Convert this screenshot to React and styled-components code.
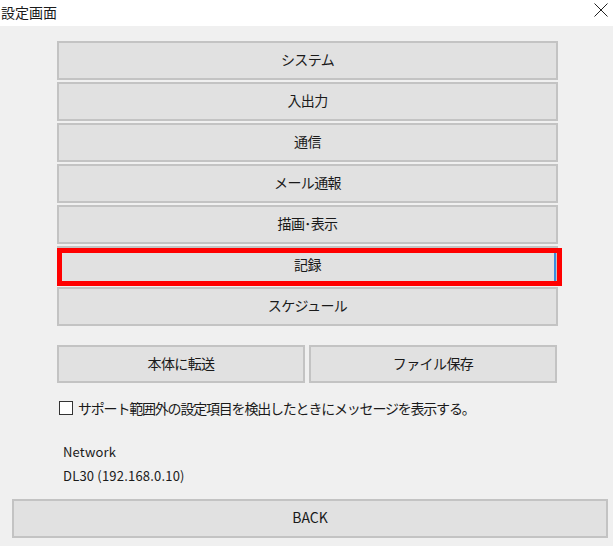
import styled, { createGlobalStyle } from 'styled-components';

const GlobalStyle = createGlobalStyle`
  html, body {
    margin: 0;
    padding: 0;
    background: #f0f0f0;
  }
  body {
    font-family: "Noto Sans CJK JP", "Noto Sans", sans-serif;
    color: #1a1a1a;
  }
`;

const Window = styled.div`
  width: 613px;
  height: 546px;
  display: flex;
  flex-direction: column;
  overflow: hidden;
`;

const TitleBar = styled.div`
  height: 26px;
  background: #fff;
  display: flex;
  align-items: center;
  justify-content: space-between;
  padding: 0 5px 0 1px;
  box-sizing: border-box;
`;

const Title = styled.span`
  font-size: 14px;
  line-height: 1;
  margin-top: -3px;
`;

const Close = styled.svg`
  width: 14px;
  height: 14px;
  margin-top: -7px;
`;

const Body = styled.div`
  flex: 1;
  background: #f0f0f0;
  display: flex;
  flex-direction: column;
  padding-top: 15px;
`;

const Menu = styled.div`
  display: flex;
  flex-direction: column;
  gap: 2px;
  width: 501px;
  margin-left: 57px;
`;

const Button = styled.div`
  position: relative;
  box-sizing: border-box;
  height: ${({ $h }) => $h || 39}px;
  padding-bottom: 3px;
  background: #e1e1e1;
  border: 2px solid #c3c3c3;
  display: flex;
  align-items: center;
  justify-content: center;
  font-size: 14px;
  letter-spacing: -0.6px;
  color: #1a1a1a;
`;

const Highlight = styled.div`
  position: absolute;
  top: 0px;
  left: -2px;
  right: -6px;
  bottom: -3px;
  border: 5px solid #ff0000;
`;

const FocusMark = styled.div`
  position: absolute;
  right: 0;
  top: 5px;
  bottom: 1px;
  width: 2px;
  background: #3a8ee0;
`;

const Actions = styled.div`
  display: grid;
  grid-template-columns: 248px 248px;
  gap: 4px;
  margin: 19px 0 0 57px;
`;

const CheckRow = styled.label`
  display: flex;
  align-items: center;
  gap: 5px;
  margin: 16px 0 0 59px;
  height: 18px;
  font-size: 14px;
  letter-spacing: -1.2px;
`;

const Box = styled.span`
  width: 14px;
  height: 14px;
  box-sizing: border-box;
  border: 1px solid #333;
  background: #fff;
  flex: none;
`;

const Info = styled.div`
  margin: 23px 0 0 63px;
  font-size: 13px;
  line-height: 24px;
  letter-spacing: 0.2px;
`;

const Back = styled(Button)`
  margin: 11px 0 0 12px;
  width: 596px;
  letter-spacing: 0;
`;

const items = ['システム', '入出力', '通信', 'メール通報', '描画･表示', '記録', 'スケジュール'];

export default function App() {
  return (
    <Window>
      <GlobalStyle />
      <TitleBar>
        <Title>設定画面</Title>
        <Close viewBox="0 0 14 14">
          <path d="M0.5 0.5 L13.5 13.5 M13.5 0.5 L0.5 13.5" stroke="#222" strokeWidth="1" fill="none" />
        </Close>
      </TitleBar>
      <Body>
        <Menu>
          {items.map((label) => (
            <Button key={label}>
              {label}
              {label === '記録' && (
                <>
                  <FocusMark />
                  <Highlight />
                </>
              )}
            </Button>
          ))}
        </Menu>
        <Actions>
          <Button $h={38}>本体に転送</Button>
          <Button $h={38}>ファイル保存</Button>
        </Actions>
        <CheckRow>
          <Box />
          サポート範囲外の設定項目を検出したときにメッセージを表示する。
        </CheckRow>
        <Info>
          <div>Network</div>
          <div>DL30 (192.168.0.10)</div>
        </Info>
        <Back>BACK</Back>
      </Body>
    </Window>
  );
}
